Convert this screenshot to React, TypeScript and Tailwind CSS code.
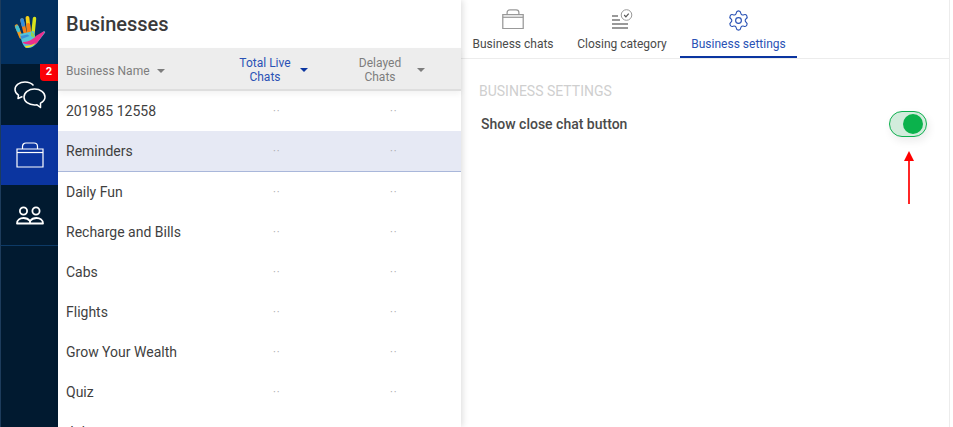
import React from 'react';
import { Settings } from 'lucide-react';

const businesses = ['201985 12558', 'Reminders', 'Daily Fun', 'Recharge and Bills', 'Cabs', 'Flights', 'Grow Your Wealth', 'Quiz', 'Jokes'];

function Caret({ className }: { className: string }) {
  return <span className={`inline-block w-0 h-0 border-x-[4px] border-x-transparent border-t-[4px] ${className}`} />;
}

function HandLogo() {
  return (
    <svg width="32" height="33" viewBox="0 0 32 33" fill="none" strokeLinecap="round">
      <path d="M2.500 10L7 21" stroke="#f59a1b" strokeWidth="3.500" />
      <path d="M3 11l1.500 3.500" stroke="#3fc1d6" strokeWidth="3.500" />
      <path d="M8 4l3.500 14" stroke="#f57f17" strokeWidth="3.500" />
      <path d="M8 4l1.200 5" stroke="#2f8fe0" strokeWidth="3.500" />
      <path d="M13.500 2l1.500 14" stroke="#f7d117" strokeWidth="3.800" />
      <path d="M14.300 9l.7 7" stroke="#f57f17" strokeWidth="3.800" />
      <path d="M20.500 2.500L19 17" stroke="#d8e21c" strokeWidth="3.500" />
      <path d="M6 18l14-3 1.500 7 8-6.500c1-.7 2.200.3 1.500 1.300L23 27c-3 4-8 6-11.500 4.500C9 30 7 24 6 18z" fill="#56c5d8" />
      <path d="M6.500 20l7-1.500 2 1.500-8 3z" fill="#3a8fd8" />
      <path d="M8.500 26c5 .5 10-2 14-6.500l7-4c.8-.2 1.500.5 1 1.300L23 27c-.5.4-1 .8-1.500 1.200-4 .8-8.500.5-12-1z" fill="#ec2f8e" />
      <path d="M11 30c3.500 0 7.500-.8 11-3.500-3 3.800-7.500 6-10.500 5z" fill="#f7e11a" />
      <path d="M17 15.500l3 2.500 1 4-4-2z" fill="#8ed14f" />
    </svg>
  );
}

function ChatsIcon() {
  return (
    <svg width="34" height="30" viewBox="0 0 34 30" fill="none" stroke="#fff" strokeWidth="1.500" strokeLinejoin="round">
      <path d="M20.500 5.500C18.500 3.300 15.500 2 12 2 6.500 2 2 5.300 2 9.500c0 2.300 1.300 4.300 3.500 5.700L5 18.500l4.500-2" />
      <path d="M21.500 9C15.700 9 11 12.500 11 17s4.700 8 10.500 8c1 0 1.800-.1 2.500-.2l3.500 2.700v-4.300c2.800-1.500 4.500-3.700 4.500-6.200 0-4.500-4.700-8-10.500-8z" />
    </svg>
  );
}

function BriefcaseIcon({ color, width, strokeWidth }: { color: string; width: number; strokeWidth: number }) {
  return (
    <svg width={width} height={width * 0.93} viewBox="0 0 28 26" fill="none" stroke={color} strokeWidth={strokeWidth}>
      <path d="M1 7h26v18H1z" />
      <path d="M1 10.500h26" />
      <path d="M6.500 7V4.500C6.500 2.500 8 1 10 1h8c2 0 3.500 1.500 3.500 3.500V7" />
    </svg>
  );
}

function PeopleIcon() {
  return (
    <svg width="28" height="19" viewBox="0 0 28 19" fill="none" stroke="#fff" strokeWidth="1.800" strokeLinejoin="round">
      <circle cx="7.500" cy="5" r="3.600" />
      <circle cx="20" cy="5" r="3.600" />
      <path d="M1 17.500c0-3.500 3-5.500 6.500-5.500 3 0 5 1 6.500 3 1.500-2 3.500-3 6.500-3 3.500 0 6.500 2 6.500 5.500z" />
      <path d="M14 15v2.500" />
    </svg>
  );
}

function ClosingIcon() {
  return (
    <svg width="22" height="22" viewBox="0 0 22 22" fill="none" stroke="#999">
      <path d="M1 8h6M1 12h8M1 16h16M1 20h16" strokeWidth="1.800" />
      <circle cx="15.500" cy="7" r="5.300" strokeWidth="1" />
      <path d="M13.200 7l1.700 1.800 2.800-3.200" stroke="#555" strokeWidth="1.200" />
    </svg>
  );
}

export default function App() {
  return (
    <div className="relative flex h-screen w-full overflow-hidden bg-white text-[#3f3f3f] font-['Roboto',sans-serif]">
      <nav className="flex w-[58px] shrink-0 flex-col border-l border-l-[#1d3c5c] bg-[#011a30]">
        <div className="flex h-[64px] items-center justify-center bg-[#03305f]">
          <HandLogo />
        </div>
        <div className="relative flex h-[61px] items-center justify-center">
          <span className="absolute right-0 top-0 flex h-[17px] w-[18px] items-center justify-center rounded-bl-sm bg-[#fb0007] text-[11px] font-bold text-white">2</span>
          <ChatsIcon />
        </div>
        <div className="flex h-[60px] items-center justify-center bg-[#0b35a0]">
          <BriefcaseIcon color="#fff" width={28} strokeWidth={1.2} />
        </div>
        <div className="flex h-[61px] items-center justify-center border-b border-b-[#0d3a66]">
          <PeopleIcon />
        </div>
      </nav>

      <section className="z-10 flex w-[403px] shrink-0 flex-col shadow-[2px_0_6px_rgba(0,0,0,0.12)]">
        <h1 className="flex h-[48px] shrink-0 items-center pl-2 text-[20px] font-medium text-[#3a3a3a]">Businesses</h1>
        <div className="relative flex h-[43px] shrink-0 items-center border-b-2 border-b-[#dedede] bg-[#ededed] pt-[3px] text-[12px] leading-[14px] text-[#7d7d7d] shadow-[0_3px_6px_rgba(0,0,0,0.05)]">
          <div className="mt-[2px] flex w-[166px] items-center gap-[7px] pl-2">
            Business Name <Caret className="border-t-[#7d7d7d]" />
          </div>
          <div className="flex w-[116px] items-center">
            <span className="ml-[6px] w-[70px] text-center text-[#2a52b5]">Total Live Chats</span>
            <Caret className="border-t-[#0b35a0]" />
          </div>
          <div className="flex flex-1 items-center">
            <span className="ml-[5px] w-[70px] text-center">Delayed Chats</span>
            <Caret className="ml-[2px] border-t-[#7d7d7d]" />
          </div>
        </div>
        {businesses.map((name) => (
          <div
            key={name}
            className={`flex shrink-0 items-center text-[14px] ${name === 'Reminders' ? 'h-[41px] border-b border-b-[#a9b7da] bg-[#e6e9f4]' : 'h-[40px]'}`}
          >
            <span className="w-[166px] pl-2">{name}</span>
            <span className="w-[116px] pl-[49px] text-[11px] leading-none tracking-[1px] text-[#a8a8a8]">··</span>
            <span className="pl-[50px] text-[11px] leading-none tracking-[1px] text-[#a8a8a8]">··</span>
          </div>
        ))}
      </section>

      <main className="mr-[3px] flex min-w-0 flex-1 flex-col border-r border-r-[#ececec]">
        <div className="flex h-[59px] shrink-0 border-b border-b-[#ececec] pl-[1px] text-[12px]">
          <div className="flex w-[102px] flex-col items-center pt-[7px] text-[#4a4a4a]">
            <div className="flex h-[24px] items-center"><BriefcaseIcon color="#999" width={22} strokeWidth={1.6} /></div>
            <span className="mt-[4px]">Business chats</span>
          </div>
          <div className="flex w-[116px] flex-col items-center pt-[7px] text-[#4a4a4a]">
            <div className="flex h-[24px] items-center"><ClosingIcon /></div>
            <span className="mt-[4px]">Closing category</span>
          </div>
          <div className="flex w-[117px] flex-col items-center border-b-2 border-b-[#0b35a0] pt-[8px] text-[#2a52b5]">
            <div className="flex h-[24px] items-center"><Settings size={23} strokeWidth={1.2} color="#2a52b5" /></div>
            <span className="mt-[3px]">Business settings</span>
          </div>
        </div>
        <div className="pl-[17px] pr-[17px] pt-[24px]">
          <h2 className="pl-[1px] text-[14px] leading-[16px] text-[#cfcfcf]">BUSINESS SETTINGS</h2>
          <div className="mt-[12px] flex items-center justify-between pl-[3px] pr-[5px]">
            <span className="text-[14px] font-medium text-[#4a4a4a]">Show close chat button</span>
            <div className="flex h-[26px] w-[38px] items-center justify-end rounded-full border border-[#0eb04f] bg-[#d2ecdc] pr-[3px] shadow-[2px_4px_8px_rgba(0,0,0,0.08)]">
              <span className="h-[20px] w-[20px] rounded-full bg-[#0bb24c]" />
            </div>
          </div>
        </div>
      </main>

      <svg className="absolute left-[901px] top-[150px]" width="16" height="56" viewBox="0 0 16 56">
        <path d="M8 10V54" stroke="#ff0000" strokeWidth="1.700" />
        <path d="M8 1l5 10H3z" fill="#ff0000" />
      </svg>
    </div>
  );
}
